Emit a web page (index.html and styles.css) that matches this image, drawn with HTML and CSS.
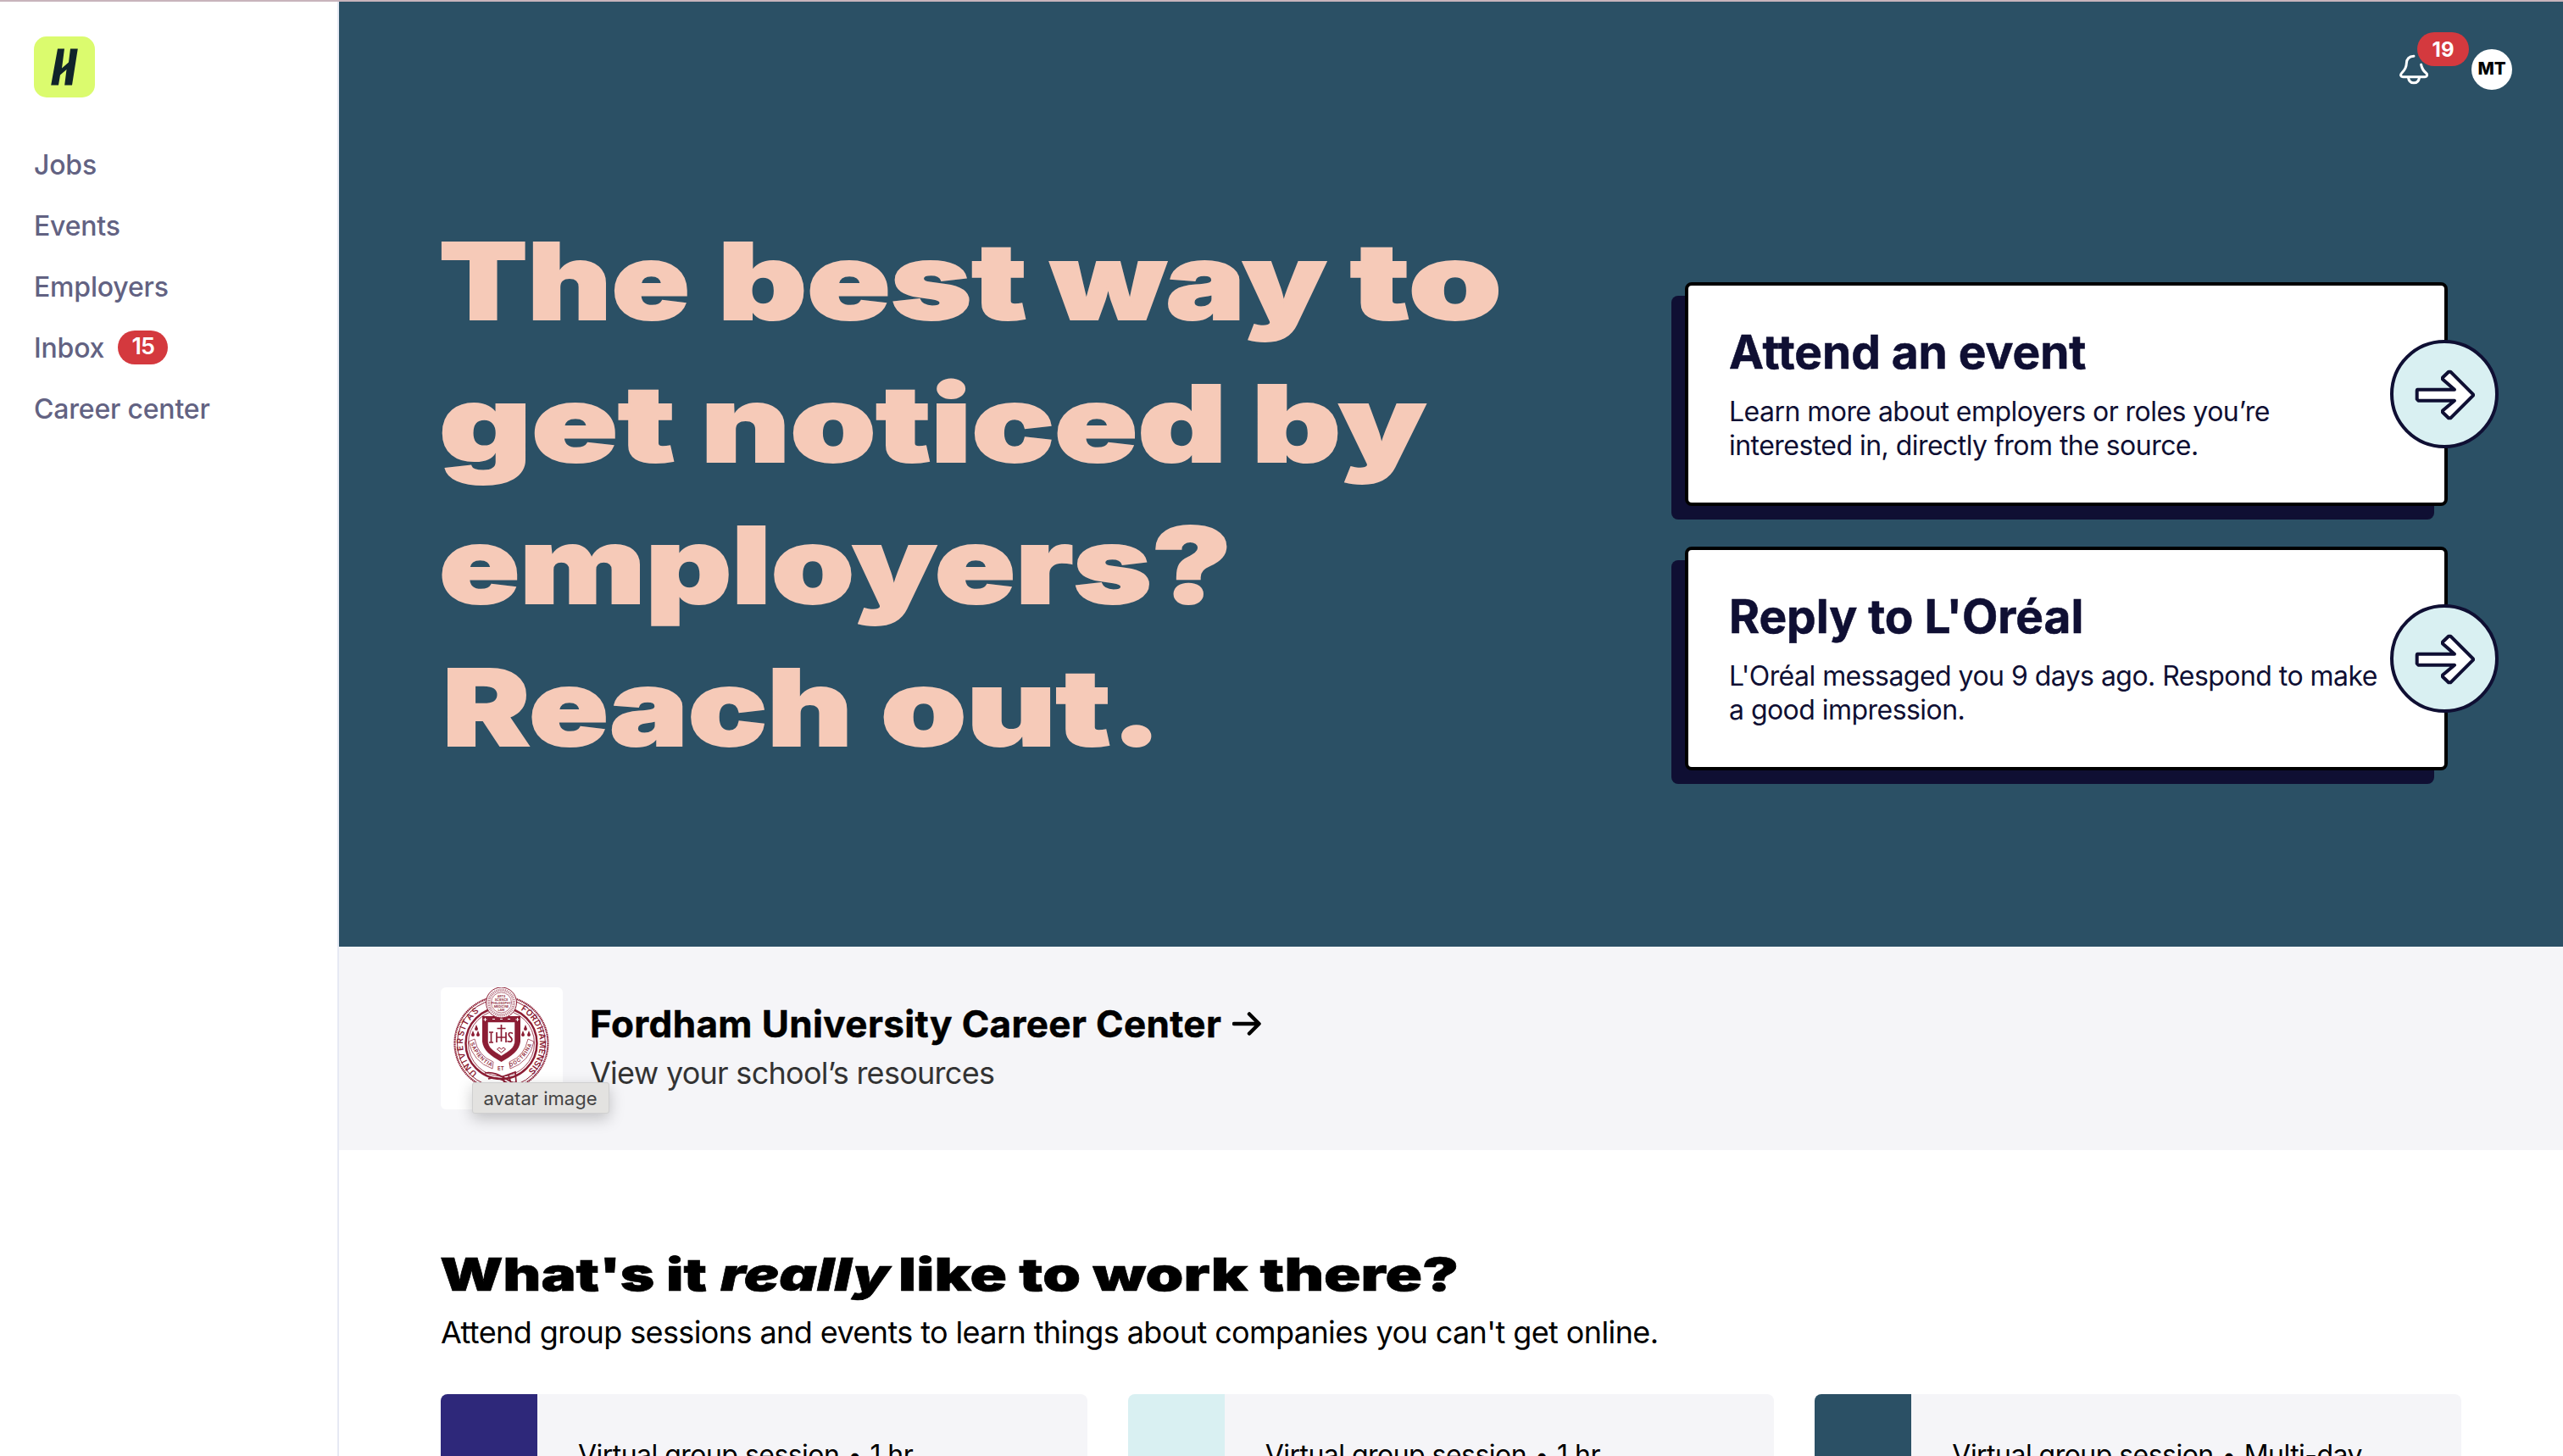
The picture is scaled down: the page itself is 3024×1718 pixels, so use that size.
FILE: index.html
```html
<!DOCTYPE html>
<html lang="en">
<head>
<meta charset="utf-8">
<title>Home</title>
<link rel="stylesheet" href="styles.css">
</head>
<body>
<div class="app">
  <nav class="sidebar">
    <svg class="logo" viewBox="0 0 72 72" role="img" aria-label="Home">
      <rect width="72" height="72" rx="15" fill="#dbfb6e"/>
      <path d="M28 14.500h8L33 37.500l8-7 2-16h8.800L45 57.500h-8.800L38.500 39 31 45.500 29 57.500h-8.800z" fill="#10242a"/>
    </svg>
    <ul class="menu">
      <li>Jobs</li>
      <li>Events</li>
      <li>Employers</li>
      <li>Inbox <span class="pill">15</span></li>
      <li>Career center</li>
    </ul>
  </nav>
  <main class="main">
    <section class="hero">
      <div class="account">
        <div class="bell">
          <svg viewBox="0 0 34 36" fill="none" stroke="#fff" stroke-width="3" stroke-linecap="round" stroke-linejoin="round">
            <path d="M17 2.300C11.500 2.500 8.500 6 8.300 11c-.1 5-1.800 7.300-5.200 10.700C.3 24.500 1.800 26.700 4 26.700h26.200c2.400 0 3.300-2.300 1.600-4.100-3.200-3-5.200-4.800-6.200-10.300"/>
            <path d="M10.500 27.500c.5 4.300 3 6.300 6.500 6.300s6-2 6.500-6.300"/>
          </svg>
          <span class="count">19</span>
        </div>
        <div class="initials">MT</div>
      </div>
      <h1 class="headline">
        <span class="line l1"><span>The</span> <span>best</span> <span>way</span> <span>to</span></span>
        <span class="line l2"><span>get</span> <span>noticed</span> <span>by</span></span>
        <span class="line l3"><span>employers?</span></span>
        <span class="line l4"><span>Reach</span> <span>out.</span></span>
      </h1>
      <div class="actions">
        <article class="action">
          <h2>Attend an event</h2>
          <p>Learn more about employers or roles you’re<br>interested in, directly from the source.</p>
          <div class="go"><svg viewBox="0 0 128 128"><path d="M32 58.700H76L62 46.500V44.500L69 37.700h2.300L98 64.300v1.400L71.300 92.300H69L62 85.500v-2L76 71.700H33.300L31.700 70V60z"/></svg></div>
        </article>
        <article class="action">
          <h2>Reply to L'Oréal</h2>
          <p>L'Oréal messaged you 9 days ago. Respond to make<br>a good impression.</p>
          <div class="go"><svg viewBox="0 0 128 128"><path d="M32 58.700H76L62 46.500V44.500L69 37.700h2.300L98 64.300v1.400L71.300 92.300H69L62 85.500v-2L76 71.700H33.300L31.700 70V60z"/></svg></div>
        </article>
      </div>
    </section>
    <section class="school">
      <div class="crest">
        <svg viewBox="0 0 144 144" fill="none" stroke="#8c1d34">
          <defs>
            <path id="ring-left" d="M43.200 101.400A45.500 45.500 0 0 1 48.700 26.600"/>
            <path id="ring-right" d="M94.300 26.600A45.500 45.500 0 0 1 99.500 101.800"/>
            <path id="ribbon-left" d="M35 66Q43 87 61 94"/>
            <path id="ribbon-right" d="M82 94Q100 87 108 66"/>
          </defs>
          <circle cx="71.500" cy="66" r="55" stroke-width="2.200" stroke-dasharray="1.500 .6"/>
          <circle cx="71.500" cy="66" r="52" stroke-width="1"/>
          <circle cx="71.500" cy="66" r="42" stroke-width="2.500"/>
          <circle cx="71.500" cy="66" r="39" stroke-width=".8"/>
          <g class="ring-text">
            <text><textPath href="#ring-left" textLength="84">UNIVERSITAS</textPath></text>
            <text><textPath href="#ring-right" textLength="84">FORDHAMENSIS</textPath></text>
          </g>
          <g fill="#8c1d34" stroke="none">
            <path d="M42 44l2 5a2 2 0 0 1-4 0zM38 51l2 5a2 2 0 0 1-4 0zM44 51l2 5a2 2 0 0 1-4 0zM100 44l2 5a2 2 0 0 1-4 0zM97 51l2 5a2 2 0 0 1-4 0zM104 51l2 5a2 2 0 0 1-4 0z"/>
            <path d="M49 34h45v30c-1 10-10 17-22.500 24C59 81 50 74 49 64z"/>
          </g>
          <path d="M55.500 41h32v22c0 8-6 12-16 18-10-6-16-10-16-18z" fill="#fff" stroke="#8c1d34" stroke-width=".5"/>
          <path d="M50.500 38h4M52.500 36v4M88.500 38h4M90.500 36v4M61 37.500h3M70 37.500h3M79 37.500h3" stroke="#fff"/>
          <path d="M71.500 44v20M66.500 48.500h10M57 53h5M57 65h5M59.500 53v12M66 53v12M77 53v12M66 59h11M85 54.500c-5-3-6 1.500-3 4s3 7.500-3.500 5" stroke-width="1.700"/>
          <path d="M66.500 73l2.500-2 2.500 2 2.500-2 2.500 2-5 4z" stroke-width="1"/>
          <path d="M40 61q4 20 22 27l-1 8Q38 88 33 64zM103 61q-4 20-22 27l1 8q23-8 28-32z" stroke-width=".7"/>
          <g class="motto"><text><textPath href="#ribbon-left" textLength="38">SAPIENTIA</textPath></text><text x="67" y="98">ET</text><text><textPath href="#ribbon-right" textLength="38">DOCTRINA</textPath></text></g>
          <circle cx="71.500" cy="18" r="18" fill="#fff" stroke-width="1"/>
          <circle cx="71.500" cy="18" r="14.800" stroke-width="3.500" stroke-dasharray="1.200 .9" opacity=".55"/>
          <circle cx="71.500" cy="18" r="12" stroke-width=".6"/>
          <g class="arts"><text x="71.500" y="11.500">ARTS</text><text x="71.500" y="15.500">SCIENCE</text><text x="71.500" y="19.500">PHILOSOPHY</text><text x="71.500" y="23.500">MEDICINE</text><text x="71.500" y="27.500">LAW</text></g>
          <path d="M52 101c12-2 19 4 34 12M56 108c9-3 16 0 26 7M74 105l14-5 1 12-14 2zM80 104l3 9" stroke-width="1.700"/>
        </svg>
        <span class="tooltip">avatar image</span>
      </div>
      <div class="school-text">
        <h2>Fordham University Career Center
          <svg class="arrow" viewBox="0 0 34 28"><path d="M2 14h29M20 2.500L31.500 14 20 25.500"/></svg>
        </h2>
        <p>View your school’s resources</p>
      </div>
    </section>
    <section class="events">
      <h2 class="events-title"><span class="t1">What's it</span> <em class="t2">really</em> <span class="t3">like to work there?</span></h2>
      <p class="events-sub">Attend group sessions and events to learn things about companies you can't get online.</p>
      <div class="cards">
        <article class="card indigo"><p>Virtual group session<span class="dot">•</span>1 hr</p></article>
        <article class="card ice"><p>Virtual group session<span class="dot">•</span>1 hr</p></article>
        <article class="card teal"><p>Virtual group session<span class="dot">•</span>Multi-day</p></article>
      </div>
    </section>
  </main>
</div>
</body>
</html>
```
FILE: styles.css
```css
* { box-sizing: border-box; margin: 0; padding: 0; }
body {
  height: 1718px;
  overflow: hidden;
  background: #fff;
  color: #000;
  font-family: Inter, "Liberation Sans", sans-serif;
  font-size: 32px;
}
.app {
  display: flex;
  height: 1718px;
  border-top: 2px solid #c8b4bc;
  overflow: hidden;
}

/* Sidebar */
.sidebar {
  flex: 0 0 400px;
  padding: 41px 0 0 40px;
  border-right: 2px solid #e6e9f3;
}
.logo { display: block; width: 72px; height: 72px; }
.menu {
  list-style: none;
  margin-top: 43px;
  color: #626282;
  font-weight: 500;
  letter-spacing: -0.2px;
}
.menu li {
  display: flex;
  align-items: center;
  gap: 16px;
  height: 72px;
}
.pill {
  width: 59px;
  height: 40px;
  border-radius: 20px;
  background: #d4393e;
  color: #fff;
  font-size: 27px;
  font-weight: 600;
  line-height: 38px;
  text-align: center;
  letter-spacing: -1px;
}

.main { flex: 1; min-width: 0; }

/* Hero */
.hero {
  position: relative;
  display: flex;
  justify-content: space-between;
  height: 1115px;
  padding: 246px 136px 0 120px;
  background: #2b5065;
}
.account {
  position: absolute;
  top: 56px;
  right: 60px;
  display: flex;
  gap: 51px;
}
.bell { position: relative; width: 34px; padding-top: 6px; }
.bell svg { display: block; width: 34px; height: 36px; }
.count {
  position: absolute;
  left: 21px;
  top: -20px;
  width: 61px;
  height: 40px;
  border-radius: 20px;
  background: #d4393e;
  color: #fff;
  font-size: 24px;
  font-weight: 700;
  line-height: 41px;
  text-align: center;
}
.initials {
  width: 48px;
  height: 48px;
  border-radius: 50%;
  background: #fff;
  font-size: 20.5px;
  font-weight: 800;
  line-height: 46px;
  text-align: center;
}
.headline {
  color: #f6cab8;
  font-size: 125px;
  font-weight: 900;
  line-height: 167.7px;
}
.line {
  display: grid;
  margin-left: -2px;
  white-space: nowrap;
  -webkit-text-stroke: 2px #f6cab8;
}
.line span { width: max-content; transform-origin: left center; }
.l1 { grid-template-columns: 329px 392px 354px auto; }
.l1 :nth-child(1) { transform: scaleX(1.218); }
.l1 :nth-child(2) { transform: scaleX(1.302); }
.l1 :nth-child(3) { transform: scaleX(1.252); }
.l1 :nth-child(4) { transform: scaleX(1.411); }
.l2 { grid-template-columns: 309px 650px auto; }
.l2 :nth-child(1) { transform: scaleX(1.348); }
.l2 :nth-child(2) { transform: scaleX(1.297); }
.l2 :nth-child(3) { transform: scaleX(1.301); }
.l3 span { transform: scaleX(1.258); }
.l4 { grid-template-columns: 517px auto; margin-left: 2px; }
.l4 :nth-child(1) { transform: scaleX(1.239); }
.l4 :nth-child(2) { transform: scaleX(1.298); }

.actions {
  display: flex;
  flex-direction: column;
  gap: 48px;
  padding-top: 85px;
}
.action {
  position: relative;
  width: 900px;
  height: 264px;
  padding: 46px 0 0 48px;
  border: 4px solid #000;
  border-radius: 8px;
  background: #fff;
  box-shadow: -16px 16px 0 #0f0f33;
  color: #0f0f33;
}
.action h2 {
  font-size: 55px;
  line-height: 64px;
  letter-spacing: -0.05px;
  -webkit-text-stroke: 0.6px #0f0f33;
}
.action p {
  margin-top: 19px;
  line-height: 40px;
  letter-spacing: -0.54px;
  white-space: nowrap;
}
.go {
  position: absolute;
  top: 64px;
  right: -64px;
  width: 128px;
  height: 128px;
  border: 4px solid #0f0f33;
  border-radius: 50%;
  background: #d9f0f2;
}
.go svg { display: block; width: 128px; height: 128px; margin: -4px; }
.go path { fill: #fff; stroke: #0f0f33; stroke-width: 4; stroke-linejoin: round; }

/* School banner */
.school {
  display: flex;
  gap: 32px;
  height: 240px;
  padding: 48px 120px;
  background: #f5f5f8;
}
.crest {
  position: relative;
  width: 144px;
  height: 144px;
  border-radius: 6px;
  background: #fff;
}
.crest svg { display: block; width: 144px; height: 144px; }
.crest text { fill: #8c1d34; stroke: none; font-weight: 600; }
.ring-text { font-size: 10px; }
.motto { font-size: 6px; }
.arts { font-size: 3.6px; text-anchor: middle; }
.tooltip {
  position: absolute;
  left: 37px;
  top: 112px;
  width: 162px;
  height: 37px;
  border: 1px solid #d0d0d0;
  border-radius: 3px;
  background: #e3e2e0;
  box-shadow: 0 6px 18px rgba(0, 0, 0, 0.22);
  color: #444;
  font-size: 22px;
  line-height: 37px;
  text-indent: -1px;
  text-align: center;
  white-space: nowrap;
}
.school-text { padding-top: 15px; }
.school-text h2 {
  display: flex;
  align-items: center;
  gap: 13px;
  font-size: 44px;
  line-height: 56px;
  letter-spacing: 0.38px;
  -webkit-text-stroke: 0.5px #000;
}
.arrow { width: 34px; height: 28px; fill: none; stroke: #000; stroke-width: 4.5; stroke-linecap: round; stroke-linejoin: round; }
.school-text p {
  margin-top: 6px;
  color: #333;
  font-size: 36px;
  line-height: 48px;
  letter-spacing: -0.72px;
}

/* Events */
.events { padding: 115px 120px 0; }
.events-title {
  display: grid;
  grid-template-columns: 331px 210px auto;
  margin-left: -1px;
  font-size: 54px;
  font-weight: 900;
  line-height: 64px;
  white-space: nowrap;
  -webkit-text-stroke: 0.6px #000;
}
.events-title > * { width: max-content; transform-origin: left center; }
.t1 { transform: scaleX(1.277); }
.t2 { transform: scaleX(1.278); }
.t3 { transform: scaleX(1.329); }
.events-sub {
  margin-top: 12px;
  font-size: 36px;
  line-height: 48px;
  letter-spacing: -0.6px;
}
.cards {
  display: grid;
  grid-template-columns: repeat(3, 1fr);
  gap: 48px;
  margin-top: 49px;
}
.card {
  height: 320px;
  padding: 52px 48px;
  border-left: 114px solid;
  border-radius: 8px;
  background: #f5f5f8;
}
.card p {
  line-height: 40px;
  letter-spacing: -0.53px;
  white-space: nowrap;
}
.dot {
  display: inline-block;
  width: 36px;
  font-size: 30px;
  line-height: 30px;
  text-align: center;
}
.indigo { border-color: #2e287a; }
.ice { border-color: #d9f0f2; }
.teal { border-color: #2b5065; }
```
